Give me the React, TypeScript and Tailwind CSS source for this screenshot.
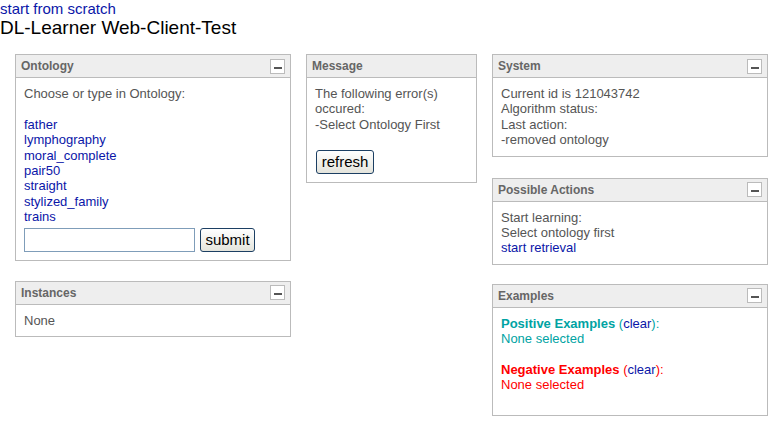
import React from 'react';

const Panel: React.FC<{ title: string; toggle?: boolean; className?: string; children: React.ReactNode }> = ({
  title,
  toggle = true,
  className = '',
  children,
}) => (
  <div className={`border border-[#bbbbbb] bg-white ${className}`}>
    <div className="flex h-[23px] items-center justify-between border-b border-[#bbbbbb] bg-[#eeeeee] pl-[5px] pr-[5px]">
      <span className="text-[12px] font-bold text-[#666666]">{title}</span>
      {toggle && (
        <button className="flex h-[15px] w-[15px] items-end justify-center border border-[#bbbbbb] bg-white pb-[4px]">
          <span className="block h-[2px] w-[8px] bg-[#555555]" />
        </button>
      )}
    </div>
    <div className="px-[8px] py-[8px] text-[13px] leading-[15.4px] text-[#555555]">{children}</div>
  </div>
);

const Link: React.FC<{ children: React.ReactNode }> = ({ children }) => (
  <a href="#" className="text-[#0a16a8]">
    {children}
  </a>
);

const ontologies = ['father', 'lymphography', 'moral_complete', 'pair50', 'straight', 'stylized_family', 'trains'];

const btn =
  'h-[24px] rounded-[3px] border border-[#1c3f63] bg-gradient-to-b from-[#ffffff] to-[#e4e4dc] px-[3px] text-[15px] leading-none text-black';

export default function App() {
  return (
    <div className="min-h-[426px] w-[777px] bg-white font-['Liberation_Sans',Arial,sans-serif]">
      <a href="#" className="block text-[15px] leading-[17px] text-[#0a16a8]">
        start from scratch
      </a>
      <h1 className="text-[19px] leading-[22px] text-black">DL-Learner Web-Client-Test</h1>

      <div className="mt-[15px] flex items-start gap-[15px] pl-[15px]">
        {/* left column */}
        <div className="flex w-[276px] flex-col gap-[20px]">
          <Panel title="Ontology">
            <div>Choose or type in Ontology:</div>
            <div className="h-[15.4px]" />
            {ontologies.map((o) => (
              <div key={o}>
                <Link>{o}</Link>
              </div>
            ))}
            <div className="mt-[3px] flex items-center gap-[5px]">
              <input type="text" className="h-[24px] w-[171px] border border-[#7f9db9] bg-white px-1 outline-none" />
              <button className={`${btn} w-[55px]`}>submit</button>
            </div>
          </Panel>

          <Panel title="Instances">
            <div>None</div>
          </Panel>
        </div>

        {/* middle column */}
        <div className="w-[171px]">
          <Panel title="Message" toggle={false}>
            <div>The following error(s)</div>
            <div>occured:</div>
            <div>-Select Ontology First</div>
            <div className="h-[15.4px]" />
            <button className={`${btn} ml-px mt-[2px] w-[58px]`}>refresh</button>
          </Panel>
        </div>

        {/* right column */}
        <div className="flex w-[276px] flex-col">
          <Panel title="System">
            <div>Current id is 121043742</div>
            <div>Algorithm status:</div>
            <div>Last action:</div>
            <div>-removed ontology</div>
          </Panel>

          <Panel title="Possible Actions" className="mt-[21px]">
            <div>Start learning:</div>
            <div>Select ontology first</div>
            <div>
              <Link>start retrieval</Link>
            </div>
          </Panel>

          <Panel title="Examples" className="mt-[19px]">
            <div className="min-h-[91px]">
              <div className="text-[#00a3a3]">
                <span className="font-bold">Positive Examples</span> (<Link>clear</Link>):
              </div>
              <div className="text-[#00a3a3]">None selected</div>
              <div className="h-[15.4px]" />
              <div className="text-[#ff0000]">
                <span className="font-bold">Negative Examples</span> (<Link>clear</Link>):
              </div>
              <div className="text-[#ff0000]">None selected</div>
            </div>
          </Panel>
        </div>
      </div>
    </div>
  );
}
